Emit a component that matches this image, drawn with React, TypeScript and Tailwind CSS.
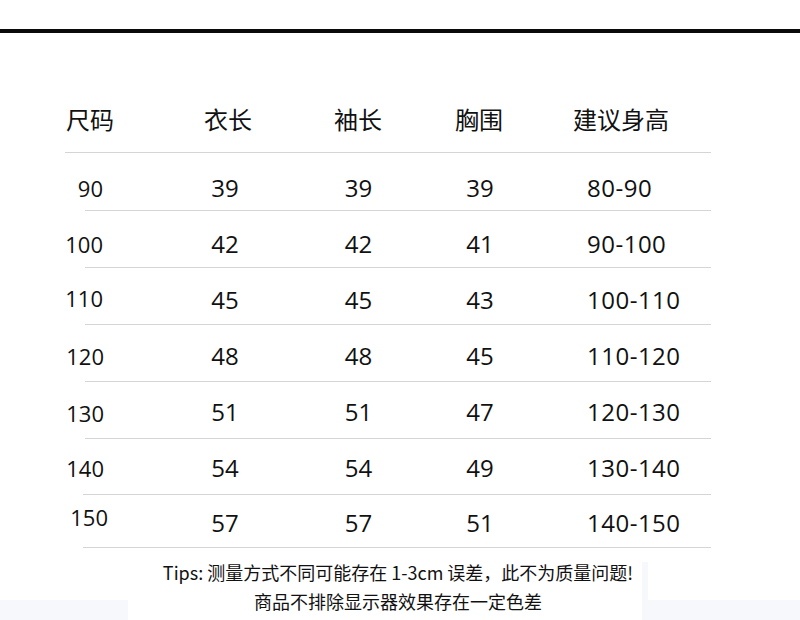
const ROWS = [
  { size: "90", a: "39", b: "39", c: "39", h: "80-90", rowCls: "h-[57px] pt-[12px]", sizeCls: "pr-[7px]", lineCls: "ml-[85px] w-[626px]" },
  { size: "100", a: "42", b: "42", c: "41", h: "90-100", rowCls: "h-[56px] pt-[9px]", sizeCls: "pr-[7px]", lineCls: "ml-[85px] w-[626px]" },
  { size: "110", a: "45", b: "45", c: "43", h: "100-110", rowCls: "h-[56px] pt-[7px]", sizeCls: "pr-[7px] mb-[4px]", lineCls: "ml-[85px] w-[626px]" },
  { size: "120", a: "48", b: "48", c: "45", h: "110-120", rowCls: "h-[56px] pt-[6px]", sizeCls: "pr-[6px]", lineCls: "ml-[85px] w-[626px]" },
  { size: "130", a: "51", b: "51", c: "47", h: "120-130", rowCls: "h-[56px] pt-[3px]", sizeCls: "pr-[6px] mt-[3px]", lineCls: "ml-[85px] w-[626px]" },
  { size: "140", a: "54", b: "54", c: "49", h: "130-140", rowCls: "h-[55px] pt-[2px]", sizeCls: "pr-[6px]", lineCls: "ml-[83px] w-[628px]" },
  { size: "150", a: "57", b: "57", c: "51", h: "140-150", rowCls: "h-[52px] pt-[4px]", sizeCls: "pr-[2px] mb-[13px] font-['Liberation_Sans',sans-serif]", lineCls: "ml-[83px] w-[628px]" },
];

const NUM = "font-['Open_Sans','Noto_Sans_CJK_SC',sans-serif]";

export default function App() {
  return (
    <div className="flex h-[620px] w-[800px] flex-col overflow-hidden bg-white text-[#111] font-['Noto_Sans_CJK_SC',sans-serif]">
      <div className="mt-[29px] h-[4px] bg-[#0a0a0a]" />

      <div className="mt-[66px] flex h-[40px] items-center text-[24px] leading-none">
        <div className="w-[163px] whitespace-nowrap pl-[66px]">尺码</div>
        <div className="w-[130px] text-center">衣长</div>
        <div className="w-[130px] text-center">袖长</div>
        <div className="w-[112px] text-center">胸围</div>
        <div className="ml-[38px] whitespace-nowrap">建议身高</div>
      </div>
      <div className="ml-[65px] mt-[13px] h-px w-[646px] bg-[#d5d5d5]" />

      {ROWS.map((row) => (
        <div key={row.size}>
          <div className={`flex items-center leading-none ${NUM} ${row.rowCls}`}>
            <div className={`w-[110px] text-right text-[22px] ${NUM} ${row.sizeCls}`}>{row.size}</div>
            <div className="ml-[50px] w-[130px] text-center text-[24px]">{row.a}</div>
            <div className="w-[137px] text-center text-[24px]">{row.b}</div>
            <div className="w-[106px] text-center text-[24px]">{row.c}</div>
            <div className="ml-[54px] text-[24px] tracking-[0.5px]">{row.h}</div>
          </div>
          <div className={`h-px bg-[#d5d5d5] ${row.lineCls}`} />
        </div>
      ))}

      <div className="flex flex-1">
        <div className="flex w-[128px] flex-col justify-end">
          <div className="h-[20px] bg-[#f6f8fc]" />
        </div>
        <div className="flex-1 pl-[26px] pt-[10px] text-center text-[18px] leading-[29px]">
          <p className="whitespace-nowrap">Tips: 测量方式不同可能存在 1-3cm 误差，此不为质量问题!</p>
          <p className="whitespace-nowrap">商品不排除显示器效果存在一定色差</p>
        </div>
        <div className="mt-[14px] w-[158px] bg-[#f6f8fc]">
          <div className="ml-[6px] h-[38px] bg-white" />
        </div>
      </div>
    </div>
  );
}
